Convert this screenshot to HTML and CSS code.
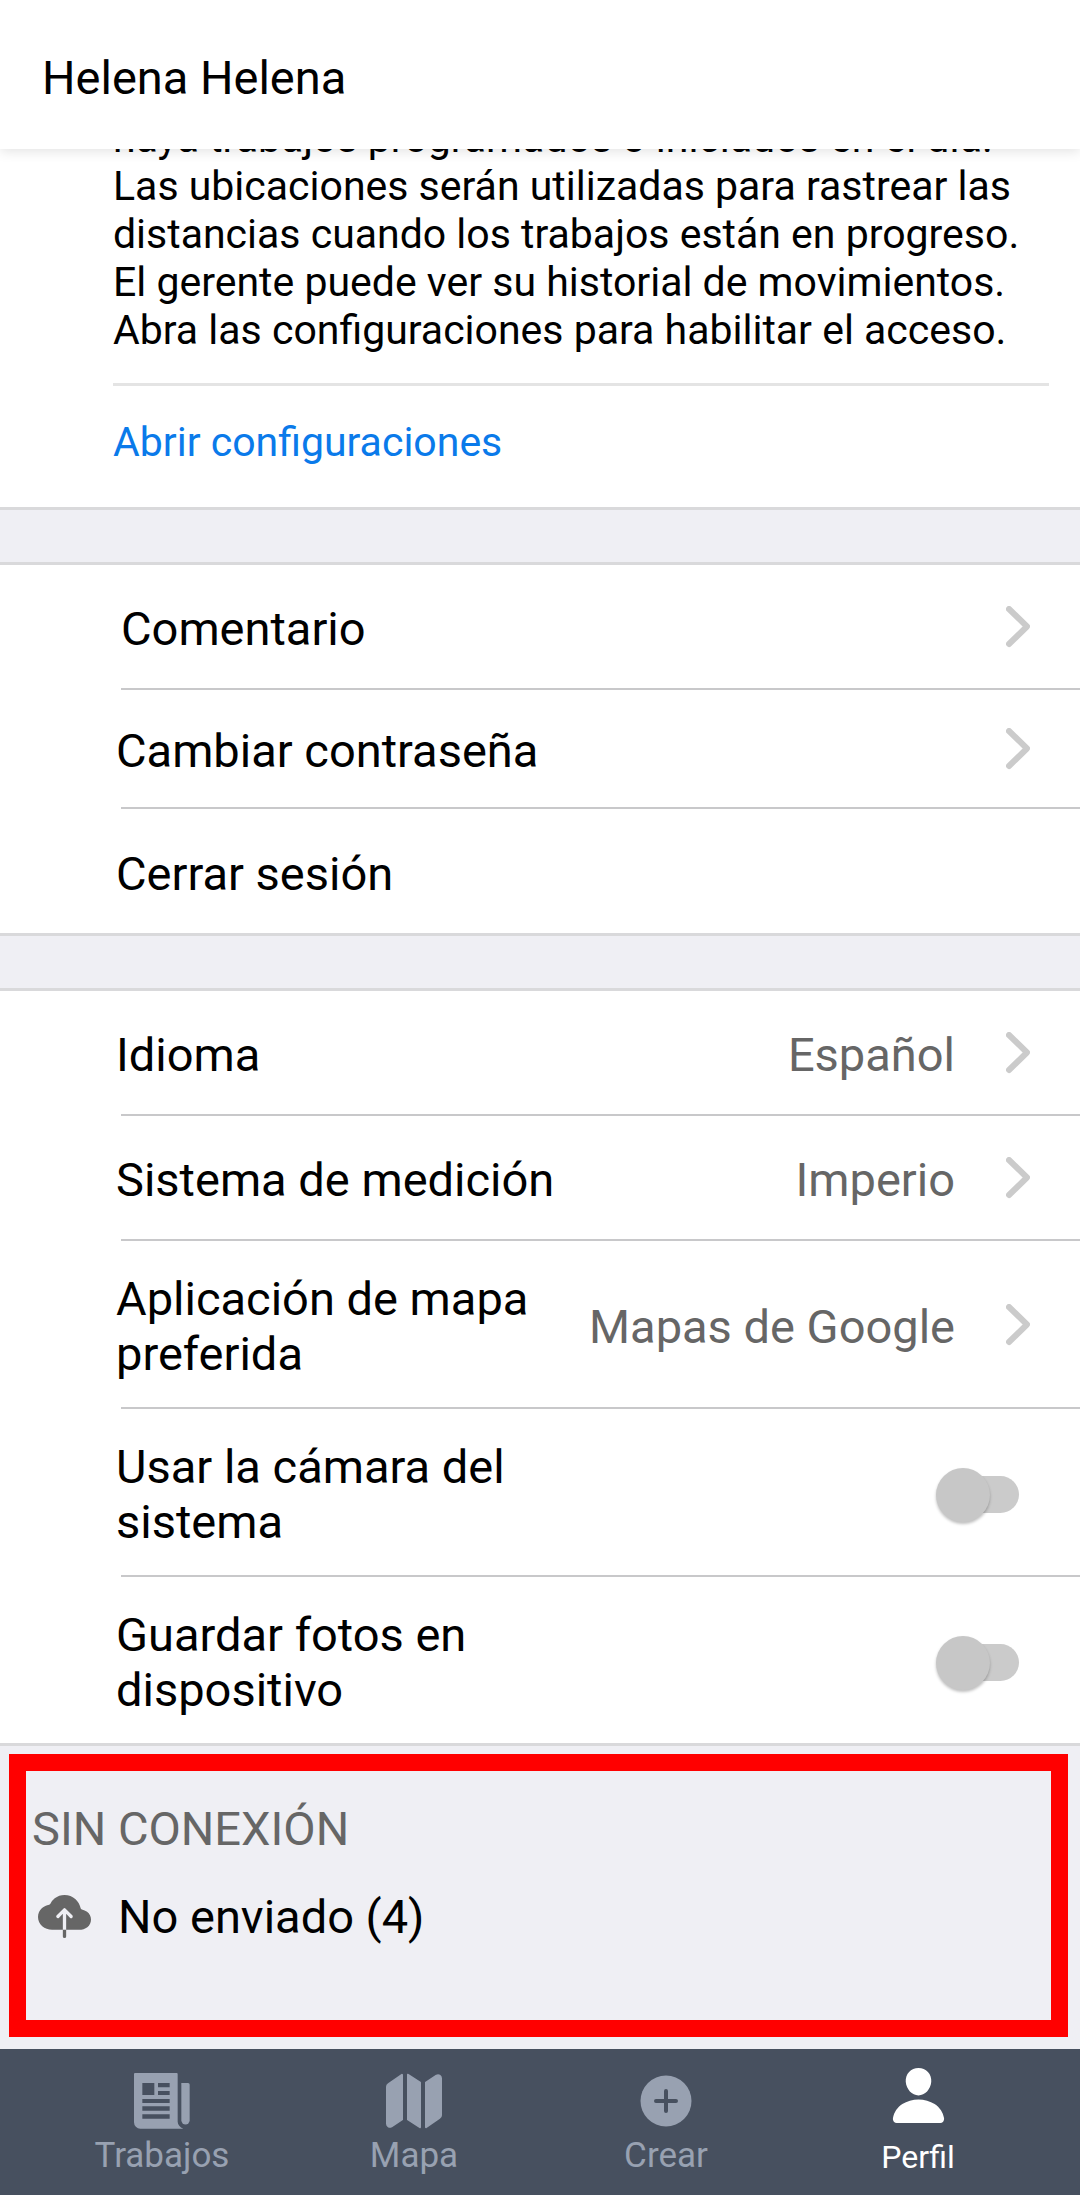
FILE: index.html
```html
<!DOCTYPE html>
<html lang="es">
<head>
<meta charset="utf-8">
<meta name="viewport" content="width=device-width, initial-scale=1">
<title>Perfil</title>
<link rel="stylesheet" href="styles.css">
</head>
<body>
<svg class="symbols" aria-hidden="true">
  <symbol id="chevron" viewBox="0 0 24 45"><path d="M3 3 L21 20.500 L3 38" fill="none" stroke="#cbcbcb" stroke-width="6" stroke-linecap="round" stroke-linejoin="round"/></symbol>
</svg>

<header class="header">
  <h1 class="header__title">Helena Helena</h1>
</header>

<main class="content">
  <section class="notice">
    <p class="notice__text">haya trabajos programados o iniciados en el día.<br>Las ubicaciones serán utilizadas para rastrear las distancias cuando los trabajos están en progreso. El gerente puede ver su historial de movimientos. Abra las configuraciones para habilitar el acceso.</p>
    <a class="notice__link" href="#configuraciones">Abrir configuraciones</a>
  </section>

  <ul class="group">
    <li><a class="row" href="#comentario"><span class="row__label row__label--aligned">Comentario</span><svg class="row__chevron" aria-hidden="true"><use href="#chevron"/></svg></a></li>
    <li><a class="row row--compact" href="#contrasena"><span class="row__label">Cambiar contraseña</span><svg class="row__chevron" aria-hidden="true"><use href="#chevron"/></svg></a></li>
    <li><button class="row" type="button"><span class="row__label">Cerrar sesión</span></button></li>
  </ul>

  <ul class="group">
    <li><a class="row" href="#idioma"><span class="row__label">Idioma</span><span class="row__value">Español</span><svg class="row__chevron" aria-hidden="true"><use href="#chevron"/></svg></a></li>
    <li><a class="row" href="#medicion"><span class="row__label">Sistema de medición</span><span class="row__value">Imperio</span><svg class="row__chevron" aria-hidden="true"><use href="#chevron"/></svg></a></li>
    <li><a class="row" href="#mapas"><span class="row__label">Aplicación de mapa preferida</span><span class="row__value">Mapas de Google</span><svg class="row__chevron" aria-hidden="true"><use href="#chevron"/></svg></a></li>
    <li class="row"><label class="row__label" for="camara">Usar la cámara del sistema</label><input class="switch" type="checkbox" role="switch" id="camara"></li>
    <li class="row"><label class="row__label" for="fotos">Guardar fotos en dispositivo</label><input class="switch" type="checkbox" role="switch" id="fotos"></li>
  </ul>

  <section class="offline">
    <h2 class="offline__title">SIN CONEXIÓN</h2>
    <a class="offline__item" href="#no-enviado">
      <svg class="offline__icon" viewBox="0 0 512 512" aria-hidden="true"><path fill="#666" d="M473.66 210c-14-10.380-31.200-18-49.360-22.110a16.110 16.110 0 01-12.190-12.220c-7.800-34.750-24.590-64.550-49.270-87.130C334.150 62.250 296.210 47.790 256 47.790c-35.350 0-68 11.080-94.370 32.050a150.070 150.070 0 00-42.060 53 16 16 0 01-11.310 8.870c-26.750 5.400-50.900 16.870-69.340 33.120C13.460 197.330 0 227.240 0 261.390c0 34.520 14.490 66 40.790 88.760 25.120 21.690 58.940 33.640 95.210 33.640h104V230.420l-36.690 36.690a16 16 0 01-23.160-.56c-5.800-6.370-5.240-16.300.85-22.390l63.690-63.680a16 16 0 0122.620 0L331 244.140c6.280 6.290 6.640 16.600.39 22.910a16 16 0 01-22.680.06L272 230.420v153.370h124c31.340 0 59.910-8.800 80.450-24.770 23.260-18.100 35.550-44 35.550-74.830 0-29.940-13.260-55.610-38.340-74.190zM240 448.210a16 16 0 1032 0v-64.420h-32z"/></svg>
      <span>No enviado (4)</span>
    </a>
  </section>
</main>

<nav class="tabs">
  <a class="tab" href="#trabajos">
    <svg class="tab__icon" viewBox="0 0 168 168" fill="currentColor" aria-hidden="true"><path fill-rule="evenodd" d="M3 0H128a3 3 0 013 3V146Q132 160 148 167H19A19 19 0 010 148V3A3 3 0 013 0zM25 30V66H61V30zM72 30V43H107V30zM72 54V66H107V54zM25 78V90H107V78zM25 100V113H107V100zM25 124V137H107V124z"/><path d="M142 30H162a5 5 0 015 5V142a12.500 12.500 0 01-25 0z"/></svg>
    <span>Trabajos</span>
  </a>
  <a class="tab" href="#mapa">
    <svg class="tab__icon" viewBox="32 32 448 448" fill="currentColor" aria-hidden="true"><path d="M48.170 113.340A32 32 0 0032 141.240V438a32 32 0 0047 28.370c.43-.23.85-.47 1.260-.74l84.140-55.050a8 8 0 003.630-6.720V46.450a8 8 0 00-12.510-6.630zM212.360 39.310A8 8 0 00200 46v357.560a8 8 0 003.630 6.720l96 62.420A8 8 0 00312 466V108.670a8 8 0 00-3.640-6.730zM464.530 46.470a31.640 31.640 0 00-31.500-.88 12.070 12.070 0 00-1.250.74l-84.150 55a8 8 0 00-3.630 6.720v357.460a8 8 0 0012.520 6.630l107.070-73.460a32 32 0 0016.410-28v-296a32.760 32.760 0 00-15.470-28.210z"/></svg>
    <span>Mapa</span>
  </a>
  <a class="tab" href="#crear">
    <svg class="tab__icon" viewBox="0 0 56 56" aria-hidden="true"><circle cx="28" cy="28" r="25.500" fill="currentColor"/><path d="M28 18V38M18 28H38" stroke="#47505f" stroke-width="4" stroke-linecap="round"/></svg>
    <span>Crear</span>
  </a>
  <a class="tab tab--active" href="#perfil" aria-current="page">
    <svg class="tab__icon" viewBox="0 0 512 512" fill="currentColor" aria-hidden="true"><path d="M332.640 64.580C313.180 43.570 286 32 256 32c-30.160 0-57.430 11.500-76.800 32.380-19.580 21.110-29.120 49.800-26.880 80.780C156.760 206.280 203.270 256 256 256s99.160-49.710 103.670-110.820c2.270-30.700-7.330-59.330-27.030-80.600zM432 480H80a31 31 0 01-24.200-11.130c-6.500-7.770-9.120-18.380-7.180-29.110C57.060 392.940 83.400 353.610 124.800 326c36.780-24.510 83.370-38 131.200-38s94.420 13.500 131.200 38c41.400 27.600 67.740 66.930 76.180 113.750 1.940 10.730-.68 21.340-7.180 29.110A31 31 0 01432 480z"/></svg>
    <span>Perfil</span>
  </a>
</nav>
</body>
</html>
```
FILE: styles.css
```css
* {
  box-sizing: border-box;
}

body {
  display: flex;
  flex-direction: column;
  min-height: 100vh;
  margin: 0;
  background: #efeff4;
  color: #000;
  font-family: Roboto, "Liberation Sans", sans-serif;
  font-size: 47px;
  line-height: 55px;
}

a {
  color: inherit;
  text-decoration: none;
}

.symbols {
  display: none;
}

/* Header */
.header {
  position: sticky;
  top: 0;
  z-index: 1;
  padding: 50px 42px 44px;
  background: #fff;
  box-shadow: 0 2px 12px rgba(0, 0, 0, 0.12);
}

.header__title {
  margin: 0;
  font-size: 47px;
  font-weight: 400;
}

.content {
  flex: 1;
}

/* Location notice, scrolled partly under the header */
.notice {
  margin-top: -35px;
  padding: 0 31px 41px 113px;
  border-bottom: 3px solid #d9d9db;
  background: #fff;
  font-size: 41px;
  line-height: 48px;
}

.notice__text {
  margin: 0;
  padding-bottom: 29px;
  border-bottom: 3px solid #e4e4e4;
}

.notice__link {
  display: block;
  padding-top: 32px;
  color: #0a7aea;
}

/* Setting groups */
.group {
  margin: 0;
  padding: 0;
  border-bottom: 3px solid #d9d9db;
  background: #fff;
  list-style: none;
}

.notice + .group,
.group + .group {
  margin-top: 52px;
  border-top: 3px solid #d9d9db;
}

.row {
  display: flex;
  align-items: center;
  min-height: 125px;
  margin-left: 121px;
  padding: 30px 50px 26px 0;
  border: 0;
  border-bottom: 2px solid #c8c8ca;
  background: none;
  color: inherit;
  font: inherit;
  text-align: left;
}

.row--compact {
  min-height: 119px;
}

.group > :last-child,
.group > :last-child .row {
  min-height: 124px;
  border-bottom: 0;
}

.row__label {
  max-width: 450px;
  margin-left: -5px;
}

.row__label--aligned {
  margin-left: 0;
}

.row__value {
  flex: none;
  margin-left: auto;
  color: #666;
}

.row__chevron {
  flex: none;
  width: 24px;
  height: 45px;
  margin-left: auto;
}

.row__value + .row__chevron {
  margin-left: 51px;
}

.switch {
  flex: none;
  width: 78px;
  height: 37px;
  margin: 0 11px 0 auto;
  border-radius: 19px;
  background: #cbcbcb;
  appearance: none;
}

.switch::before {
  content: "";
  display: block;
  width: 54px;
  height: 54px;
  margin: -8px 0 0 -5px;
  border-radius: 50%;
  background: #c7c7c7;
  box-shadow: 0 2px 3px rgba(0, 0, 0, 0.25);
}

/* Offline section */
.offline {
  margin: 8px 12px 12px 9px;
  padding: 30px 6px 76px;
  border: 17px solid #f00;
}

.offline__title {
  margin: 0 0 33px;
  color: #666;
  font-size: 47px;
  font-weight: 400;
}

.offline__item {
  display: flex;
  align-items: center;
  gap: 27px;
  padding-left: 6px;
}

.offline__icon {
  width: 53px;
  height: 53px;
}

/* Bottom tabs */
.tabs {
  display: flex;
  padding: 0 36px;
  background: #47505f;
  color: #98a1b1;
  font-size: 35px;
  line-height: 40px;
}

.tab {
  display: flex;
  flex: 1;
  flex-direction: column;
  align-items: center;
  gap: 7px;
  padding: 24px 0 19px;
}

.tab__icon {
  width: 56px;
  height: 56px;
}

.tab--active {
  gap: 10px;
  padding-top: 15px;
  padding-bottom: 18px;
  color: #fff;
  font-size: 32px;
}

.tab--active .tab__icon {
  width: 63px;
  height: 63px;
}
```
